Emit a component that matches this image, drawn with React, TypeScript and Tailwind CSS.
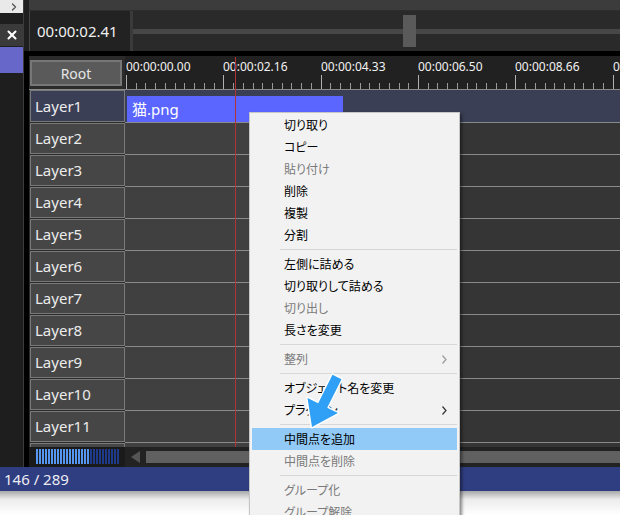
import { ChevronRight, X } from 'lucide-react'

type MenuEntry = { label: string; disabled?: boolean; sub?: boolean; active?: boolean } | 'sep'

const menuEntries: MenuEntry[] = [
  { label: '切り取り' },
  { label: 'コピー' },
  { label: '貼り付け', disabled: true },
  { label: '削除' },
  { label: '複製' },
  { label: '分割' },
  'sep',
  { label: '左側に詰める' },
  { label: '切り取りして詰める' },
  { label: '切り出し', disabled: true },
  { label: '長さを変更' },
  'sep',
  { label: '整列', disabled: true, sub: true },
  'sep',
  { label: 'オブジェクト名を変更' },
  { label: 'プラグイン', sub: true },
  'sep',
  { label: '中間点を追加', active: true },
  { label: '中間点を削除', disabled: true },
  'sep',
  { label: 'グループ化', disabled: true },
  { label: 'グループ解除', disabled: true },
]

const rulerLabels = ['00:00:00.00', '00:00:02.16', '00:00:04.33', '00:00:06.50', '00:00:08.66', '00:00:10.83']
const layers = Array.from({ length: 12 }, (_, i) => `Layer${i + 1}`)

function LeftStrip() {
  return (
    <div className="w-[23px] flex flex-col bg-[#1e1e1e]">
      <div className="h-[13px] bg-[#e9e9e9] flex items-center justify-end pr-[3px]">
        <ChevronRight size={12} strokeWidth={2.75} className="text-[#555]" />
      </div>
      <div className="h-[11px]" />
      <div className="h-[22px] bg-[#3a3a3a] flex items-center justify-center">
        <X size={14} strokeWidth={3.5} className="text-white" />
      </div>
      <div className="h-px" />
      <div className="h-[26px] bg-[#6767c9]" />
    </div>
  )
}

function PreviewBar() {
  return (
    <div className="flex h-[51px]">
      <div className="w-[5px]" />
      <div className="flex-1 flex flex-col">
        <div className="h-[11px] bg-[#3c3c3c] border-b border-[#2e2e2e]" />
        <div className="flex-1 flex">
          <div className="w-[101px] bg-[#222] border-l border-[#464646] flex items-center pl-[7px] text-[15px] text-[#f0f0f0]">
            00:00:02.41
          </div>
          <div className="w-[3px] bg-[#3a3a3a]" />
          <div className="relative flex-1 flex items-center bg-[#2a2a2a]">
            <div className="h-[5px] w-full bg-[#474747]" />
            <div className="absolute left-[270px] top-[4px] w-[13px] h-[32px] bg-[#5a5a5a]" />
          </div>
        </div>
      </div>
    </div>
  )
}

function Ruler() {
  const ticks = Array.from({ length: 51 }, (_, i) => i)
  return (
    <div className="relative flex-1 bg-[#212121] overflow-hidden">
      <svg className="absolute left-0 top-0" width="495" height="33">
        {ticks.map((i) => {
          const x = Math.round(1 + i * 9.733)
          const major = i % 10 === 0
          return (
            <rect key={i} x={x} y={major ? 19 : 27} width="1" height={major ? 14 : 6} fill={major ? '#b0b0b0' : '#9a9a9a'} />
          )
        })}
      </svg>
      {rulerLabels.map((label, k) => (
        <span
          key={label}
          className="absolute top-[3px] text-[12px] leading-[16px] text-[#f2f2f2] whitespace-nowrap"
          style={{ left: Math.round(1 + k * 97.33) }}
        >
          {label}
        </span>
      ))}
    </div>
  )
}

function LayerRow({ name, index }: { name: string; index: number }) {
  const selected = index === 0
  return (
    <div className="flex h-[32px] shrink-0">
      <div className={`w-[96px] flex bg-[#2a2a2a] ${index > 0 ? 'pt-px' : ''}`}>
        <div
          className={`ml-px flex-1 flex items-center pl-[4px] border border-[#7a7a7a] text-[15px] text-[#ececec] ${
            selected ? 'bg-[#3a3f56]' : 'bg-[#464646]'
          }`}
        >
          {name}
        </div>
      </div>
      {selected ? (
        <div className="flex-1 bg-[#3a3f56] pt-[6px] pl-[2px]">
          <div className="w-[216px] h-[26px] bg-[#5a66ff] flex items-center pl-[5px] text-[15px] text-white">猫.png</div>
        </div>
      ) : (
        <div className="flex-1 border-t border-[#8a8a8a] bg-[linear-gradient(to_right,#404040_325px,#353535_325px)]" />
      )}
    </div>
  )
}

function Timeline() {
  const bars = Array.from({ length: 28 }, (_, i) => i)
  return (
    <div className="flex-1 flex bg-black min-h-0">
      <div className="w-[5px]" />
      <div className="relative flex-1 flex flex-col min-w-0">
        {/* Header */}
        <div className="flex h-[33px]">
          <div className="w-[96px] bg-[#2b2b2b] pl-px pt-[4px]">
            <div className="w-[92px] h-[26px] bg-[#5a5a5a] border-2 border-[#777] flex items-center justify-center text-[14px] text-[#e6e6e6]">
              Root
            </div>
          </div>
          <Ruler />
        </div>
        <div className="h-px bg-[#8a8a8a]" />

        {/* Layers */}
        <div className="h-[357px] overflow-hidden flex flex-col">
          {layers.map((name, i) => (
            <LayerRow key={name} name={name} index={i} />
          ))}
        </div>

        {/* Scroll row */}
        <div className="flex h-[20px]">
          <div className="w-[96px] bg-[#1a1a1a] pl-[7px] pt-[2px] flex gap-px">
            {bars.map((i) => (
              <div key={i} className={`w-[2px] h-[15px] ${i < 18 ? 'bg-[#5596f0]' : 'bg-[#1e3a8c]'}`} />
            ))}
          </div>
          <div className="flex-1 flex items-center bg-[#222]">
            <svg className="ml-[6px]" width="9" height="12">
              <polygon points="9,0 9,12 0,6" fill="#555" />
            </svg>
            <div className="ml-[6px] flex-1 h-[12px] bg-[#606060]" />
          </div>
        </div>

        {/* Playhead */}
        <div className="absolute left-[206px] top-px w-px h-[390px] bg-[#b03434]" />
      </div>
    </div>
  )
}

function ContextMenu() {
  return (
    <div className="absolute left-[249px] top-[112px] w-[211px] border border-[#c6c6c6] bg-[#f2f2f2] pt-px shadow-[2px_2px_3px_rgba(0,0,0,0.45)] font-['Noto_Sans_CJK_JP',sans-serif] [font-feature-settings:'palt']">
      {menuEntries.map((entry, i) =>
        entry === 'sep' ? (
          <div key={i} className="h-[7px] flex items-center ml-[30px] mr-[2px]">
            <div className="h-px w-full bg-[#d7d7d7]" />
          </div>
        ) : (
          <div
            key={i}
            className={`mx-[2px] h-[22px] flex items-center pl-[32px] pr-[10px] text-[12px] ${
              entry.active ? 'bg-[#91c9f7]' : ''
            } ${entry.disabled ? 'text-[#7a7a7a]' : 'text-black'}`}
          >
            <span className="flex-1">{entry.label}</span>
            {entry.sub && (
              <svg width="5" height="9">
                <polyline
                  points="0.5,0.5 4,4.5 0.5,8.5"
                  fill="none"
                  stroke={entry.disabled ? '#9a9a9a' : '#333'}
                  strokeWidth="1.2"
                />
              </svg>
            )}
          </div>
        )
      )}
    </div>
  )
}

function PointerArrow() {
  return (
    <svg className="absolute left-[300px] top-[370px]" width="48" height="63">
      <polygon
        points="12,57 37.9,43.1 27.2,37.7 41.5,9.2 32.5,4.8 18.2,33.3 7.5,27.9"
        fill="#2fa0f5"
        stroke="#ffffff"
        strokeWidth="3"
        strokeLinejoin="round"
        paintOrder="stroke"
      />
    </svg>
  )
}

export default function App() {
  return (
    <div className="relative w-[620px] h-[515px] overflow-hidden bg-white font-['Noto_Sans','Noto_Sans_CJK_JP',sans-serif]">
      <div className="flex flex-col h-[491px]">
        <div className="flex h-[467px]">
          <LeftStrip />
          <div className="w-px bg-[#3c3c3c]" />
          <div className="flex-1 flex flex-col bg-[#1e1e1e] min-w-0">
            <PreviewBar />
            <div className="h-[5px] bg-black" />
            <Timeline />
          </div>
        </div>
        <div className="h-[24px] bg-[#2f3e80] flex items-center pl-[4px] text-[15px] text-[#ececf4]">146 / 289</div>
      </div>
      <div className="h-[24px] bg-[linear-gradient(to_bottom,#a8a8a8,#ececec_35%,#ffffff)]" />
      <ContextMenu />
      <PointerArrow />
    </div>
  )
}
